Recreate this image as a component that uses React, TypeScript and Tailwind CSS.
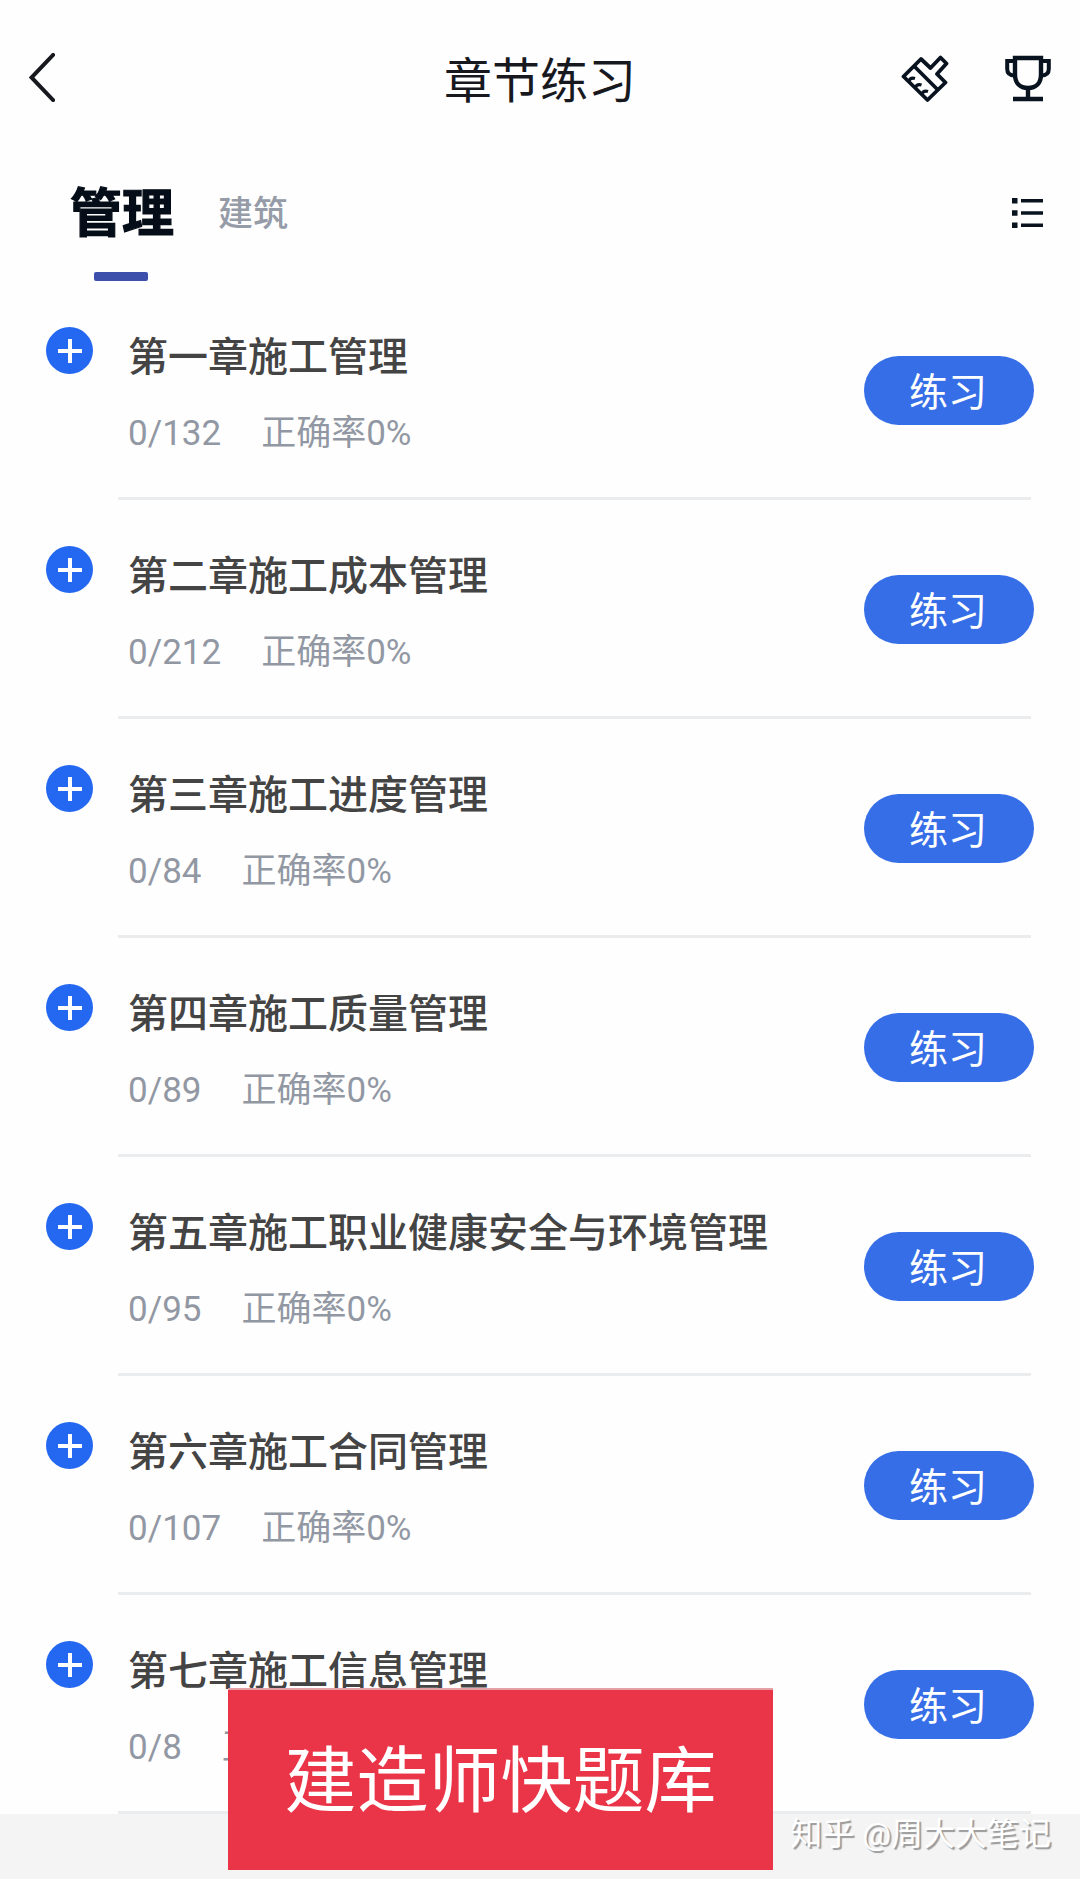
interface Chapter {
  title: string
  done: number
  total: number
}

const chapters: Chapter[] = [
  { title: '第一章施工管理', done: 0, total: 132 },
  { title: '第二章施工成本管理', done: 0, total: 212 },
  { title: '第三章施工进度管理', done: 0, total: 84 },
  { title: '第四章施工质量管理', done: 0, total: 89 },
  { title: '第五章施工职业健康安全与环境管理', done: 0, total: 95 },
  { title: '第六章施工合同管理', done: 0, total: 107 },
  { title: '第七章施工信息管理', done: 0, total: 8 },
]

function BackIcon() {
  return (
    <svg className="w-[26px] h-[49px]" viewBox="0 0 26 49" fill="none" stroke="#17191f" strokeWidth="4">
      <path d="M25.5 0.5L2.5 24.5L25.5 48.5" />
    </svg>
  )
}

function BrushIcon() {
  return (
    <svg className="w-[48px] h-[48px]" viewBox="0 0 48 48" fill="none" stroke="#08131f" strokeWidth="3.8" strokeLinejoin="round">
      <path d="M20 4L2.5 21.5L26.5 45L44.5 27.5L36 19L45.5 8.5L39.5 2.5L29.5 13Z" />
      <path d="M13 11L36 34" />
      <path d="M7.5 26.5Q9.5 22 14 23.5M14 33Q16 28.5 20.5 30M20.5 39.5Q22.5 35 27 36.5" strokeWidth="3.2" />
    </svg>
  )
}

function TrophyIcon() {
  return (
    <svg className="w-[46px] h-[47px]" viewBox="0 0 46 47" fill="none" stroke="#08131f" strokeWidth="4.4">
      <path d="M10 3H36V19.5C36 28 31 33 23 33S10 28 10 19.5Z" />
      <path d="M10 6H2.2V14Q2.2 20.5 10 20.5M36 6H43.8V14Q43.8 20.5 36 20.5" strokeWidth="4" />
      <path d="M23 33V44M8 44H38" />
    </svg>
  )
}

function ListIcon() {
  return (
    <svg className="w-[32px] h-[30px]" viewBox="0 0 32 30" fill="#08131f">
      <path d="M0 0h5.5v5.5H0zM9 1h22v3.5H9zM0 12.2h5.5v5.5H0zM9 13.2h22v3.5H9zM0 24.4h5.5v5.5H0zM9 25.4h22v3.5H9z" />
    </svg>
  )
}

function ChapterRow({ chapter }: { chapter: Chapter }) {
  return (
    <div className="h-[219px] pl-[46px] flex items-start">
      <button className="mt-[46px] w-[47px] h-[47px] shrink-0 rounded-full bg-[#2468f2] flex items-center justify-center">
        <svg className="w-[24px] h-[24px]" viewBox="0 0 24 24" stroke="#fff" strokeWidth="4">
          <path d="M12 0V24M0 12H24" />
        </svg>
      </button>
      <div className="ml-[25px] w-[913px] h-full border-b-3 border-[#ebecee] flex items-start justify-between">
        <div className="pl-[10px] pt-[47px]">
          <div className="text-[40px] leading-[60px] font-medium text-[#444]">{chapter.title}</div>
          <div className="mt-[21px] flex gap-[40px] text-[35px] leading-[50px] text-[#9298a3]">
            <span>{chapter.done}/{chapter.total}</span>
            <span>正确率0%</span>
          </div>
        </div>
        <button className="mt-[75px] -mr-[3px] w-[170px] h-[69px] pr-[2px] shrink-0 rounded-full bg-[#366ee8] text-white text-[39px] leading-[75px]">
          练习
        </button>
      </div>
    </div>
  )
}

export default function App() {
  return (
    <div className="relative w-[1080px] h-[1879px] overflow-hidden bg-[#f4f4f4] font-[Roboto,'Noto_Sans_CJK_SC',sans-serif]">
      <div className="bg-[#fefefe]">
        <header className="h-[160px] pl-[29px] pr-[29px] grid grid-cols-[1fr_auto_1fr] items-center">
          <div className="-mt-[5px]"><BackIcon /></div>
          <h1 className="mt-[4px] text-[48px] leading-[64px] text-[#17191f]">章节练习</h1>
          <div className="flex items-center justify-end gap-[56px] -mt-[3px]">
            <BrushIcon />
            <TrophyIcon />
          </div>
        </header>

        <nav className="h-[121px] pl-[70px] pr-[36px] flex items-start justify-between">
          <div className="flex items-start">
            <div className="flex flex-col items-center">
              <span className="mt-[15px] text-[52px] leading-[80px] font-bold text-[#050d18] [-webkit-text-stroke:1.2px_#050d18]">管理</span>
              <span className="mt-[17px] mr-[2px] w-[54px] h-[9px] rounded-xs bg-[#3b4fab]" />
            </div>
            <span className="ml-[44px] mt-[25px] text-[35px] leading-[60px] font-medium text-[#959ca8]">建筑</span>
          </div>
          <div className="mt-[38px]"><ListIcon /></div>
        </nav>

        {chapters.map((chapter) => (
          <ChapterRow key={chapter.title} chapter={chapter} />
        ))}
      </div>

      <div className="absolute left-[228px] top-[1688px] w-[545px] h-[182px] border-t-2 border-[#e5a0a6] bg-[#ea3447] text-white text-[72px] leading-[183px] text-center">
        建造师快题库
      </div>
      <div className="absolute right-[29px] top-[1812px] text-[32px] leading-[44px] text-white whitespace-nowrap [text-shadow:2px_2px_1px_#999]">
        知乎 @周大大笔记
      </div>
    </div>
  )
}
